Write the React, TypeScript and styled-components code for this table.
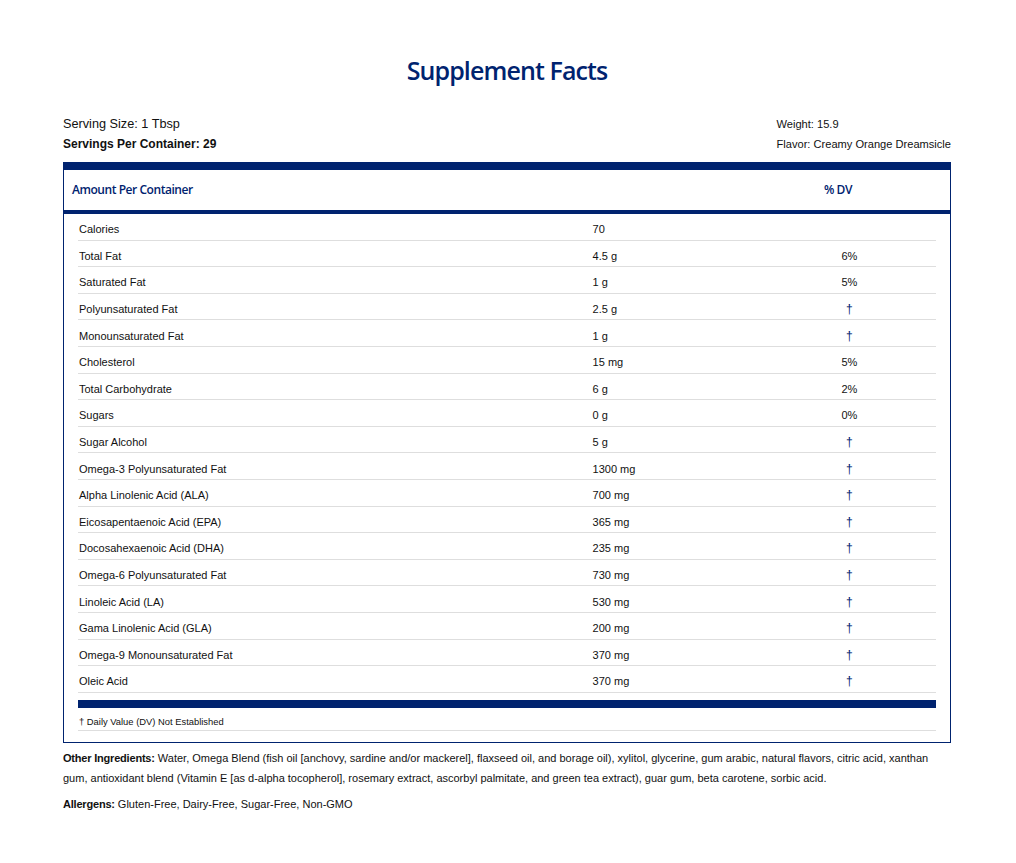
import React from 'react';
import styled, { createGlobalStyle } from 'styled-components';

const NAVY = '#00236f';

const GlobalStyle = createGlobalStyle`
    body {
        margin: 0;
        background: #fff;
        color: #111;
        font-family: "Liberation Sans", Arial, sans-serif;
    }
`;

const Page = styled.main`
    padding: 52px 65px 40px 63px;
`;

const Title = styled.h1`
    margin: 0;
    text-align: center;
    font-family: "Open Sans", sans-serif;
    font-weight: 600;
    font-size: 25px;
    line-height: 36px;
    letter-spacing: -0.9px;
    color: ${NAVY};
`;

const Info = styled.div`
    display: flex;
    justify-content: space-between;
    margin-top: 26px;
`;

const InfoLine = styled.div<{ $size: number; $bold?: boolean }>`
    font-size: ${p => p.$size}px;
    font-weight: ${p => (p.$bold ? 700 : 400)};
    line-height: 20px;
`;

const FactsBox = styled.section`
    margin-top: 8px;
    border: 1px solid ${NAVY};
    border-top: 8px solid ${NAVY};
    padding-bottom: 11px;
`;

const Header = styled.div`
    display: grid;
    grid-template-columns: 1fr 208px;
    align-items: center;
    height: 40px;
    padding: 0 8px 2px;
    box-sizing: border-box;
    border-bottom: 4px solid ${NAVY};
    font-family: "Open Sans", sans-serif;
    font-weight: 600;
    font-size: 12px;
    letter-spacing: -0.45px;
    color: ${NAVY};
    height: 44px;
`;

const HeaderDv = styled.span`
    text-align: center;
`;

const Body = styled.div`
    padding: 0 14px;
`;

const Row = styled.div`
    display: grid;
    grid-template-columns: 60% 20% 20%;
    align-items: center;
    height: 26.6px;
    box-sizing: border-box;
    padding: 5px 1px 0;
    border-bottom: 1px solid #dedede;
    font-size: 11px;
`;

const Dv = styled.span<{ $dagger?: boolean }>`
    text-align: center;
    color: ${p => (p.$dagger ? NAVY : 'inherit')};
    font-size: ${p => (p.$dagger ? 12 : 11)}px;
`;

const ThickBar = styled.div`
    height: 8px;
    margin-top: 7px;
    background: ${NAVY};
`;

const Footnote = styled.div`
    height: 23px;
    display: flex;
    align-items: center;
    padding: 5px 0 0 1px;
    box-sizing: border-box;
    border-bottom: 1px solid #dedede;
    font-size: 9.4px;
`;

const Paragraph = styled.p`
    margin: 5px 0 0;
    font-size: 11px;
    line-height: 20px;

    & + & {
        margin-top: 6px;
    }

    b {
        font-weight: 700;
        letter-spacing: -0.2px;
    }
`;

type Fact = [string, string, string];

const facts: Fact[] = [
    ['Calories', '70', ''],
    ['Total Fat', '4.5 g', '6%'],
    ['Saturated Fat', '1 g', '5%'],
    ['Polyunsaturated Fat', '2.5 g', '†'],
    ['Monounsaturated Fat', '1 g', '†'],
    ['Cholesterol', '15 mg', '5%'],
    ['Total Carbohydrate', '6 g', '2%'],
    ['Sugars', '0 g', '0%'],
    ['Sugar Alcohol', '5 g', '†'],
    ['Omega-3 Polyunsaturated Fat', '1300 mg', '†'],
    ['Alpha Linolenic Acid (ALA)', '700 mg', '†'],
    ['Eicosapentaenoic Acid (EPA)', '365 mg', '†'],
    ['Docosahexaenoic Acid (DHA)', '235 mg', '†'],
    ['Omega-6 Polyunsaturated Fat', '730 mg', '†'],
    ['Linoleic Acid (LA)', '530 mg', '†'],
    ['Gama Linolenic Acid (GLA)', '200 mg', '†'],
    ['Omega-9 Monounsaturated Fat', '370 mg', '†'],
    ['Oleic Acid', '370 mg', '†'],
];

const App: React.FC = () => (
    <>
        <GlobalStyle />
        <Page>
            <Title>Supplement Facts</Title>
            <Info>
                <div>
                    <InfoLine $size={12.7}>Serving Size: 1 Tbsp</InfoLine>
                    <InfoLine $size={12} $bold>Servings Per Container: 29</InfoLine>
                </div>
                <div>
                    <InfoLine $size={11.1}>Weight: 15.9</InfoLine>
                    <InfoLine $size={11.1}>Flavor: Creamy Orange Dreamsicle</InfoLine>
                </div>
            </Info>
            <FactsBox>
                <Header>
                    <span>Amount Per Container</span>
                    <HeaderDv>% DV</HeaderDv>
                </Header>
                <Body>
                    {facts.map(([name, amount, dv]) => (
                        <Row key={name}>
                            <span>{name}</span>
                            <span>{amount}</span>
                            <Dv $dagger={dv === '†'}>{dv}</Dv>
                        </Row>
                    ))}
                    <ThickBar />
                    <Footnote>† Daily Value (DV) Not Established</Footnote>
                </Body>
            </FactsBox>
            <Paragraph>
                <b>Other Ingredients:</b> Water, Omega Blend (fish oil [anchovy, sardine and/or mackerel], flaxseed oil, and borage oil), xylitol, glycerine, gum arabic, natural flavors, citric acid, xanthan gum, antioxidant blend (Vitamin E [as d-alpha tocopherol], rosemary extract, ascorbyl palmitate, and green tea extract), guar gum, beta carotene, sorbic acid.
            </Paragraph>
            <Paragraph>
                <b>Allergens:</b> Gluten-Free, Dairy-Free, Sugar-Free, Non-GMO
            </Paragraph>
        </Page>
    </>
);

export default App;
